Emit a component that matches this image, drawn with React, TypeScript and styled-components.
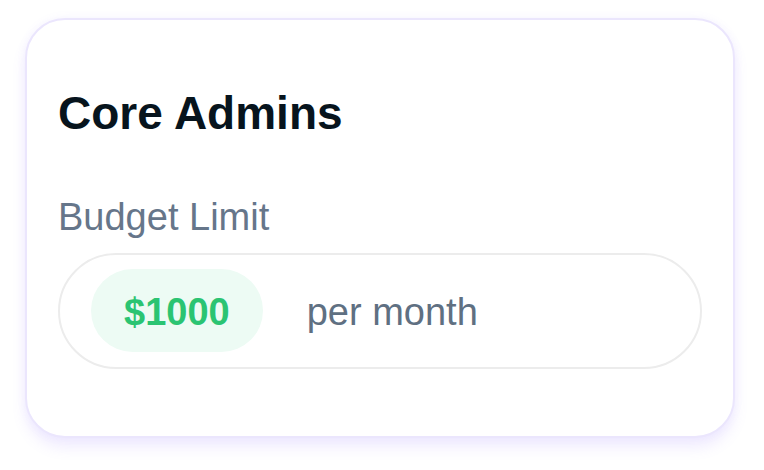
import styled, { createGlobalStyle } from "styled-components";

const GlobalStyle = createGlobalStyle`
  html, body {
    margin: 0;
    padding: 0;
    background: #ffffff;
  }
  body {
    font-family: "Liberation Sans", Arial, sans-serif;
  }
`;

const Page = styled.div`
  padding: 18px 29px 34px 25px;
`;

const Card = styled.div`
  box-sizing: border-box;
  width: 710px;
  padding: 66px 31px 67px 31px;
  background: #ffffff;
  border: 2px solid #ebe6fd;
  border-radius: 40px;
  box-shadow: 0 0 10px rgba(140, 110, 255, 0.07), 0 10px 14px rgba(140, 110, 255, 0.12);
`;

const Title = styled.h2`
  margin: 0;
  font-size: 46px;
  line-height: 1.2;
  font-weight: 700;
  color: #07141d;
`;

const Label = styled.div`
  margin-top: 54px;
  font-size: 38px;
  line-height: 1.2;
  color: #66768a;
`;

const BudgetBox = styled.div`
  box-sizing: border-box;
  margin-top: 12px;
  height: 116px;
  display: flex;
  align-items: center;
  padding: 0 31px;
  border: 2px solid #ececec;
  border-radius: 58px;
`;

const Amount = styled.div`
  box-sizing: border-box;
  height: 83px;
  display: flex;
  align-items: center;
  padding: 3px 33px 0 33px;
  border-radius: 42px;
  background: #edfbf4;
  color: #2bc472;
  font-size: 38px;
  font-weight: 700;
`;

const Period = styled.div`
  margin-left: 44px;
  padding-top: 4px;
  font-size: 38px;
  color: #5f7082;
`;

export default function App() {
  return (
    <>
      <GlobalStyle />
      <Page>
        <Card>
          <Title>Core Admins</Title>
          <Label>Budget Limit</Label>
          <BudgetBox>
            <Amount>$1000</Amount>
            <Period>per month</Period>
          </BudgetBox>
        </Card>
      </Page>
    </>
  );
}
